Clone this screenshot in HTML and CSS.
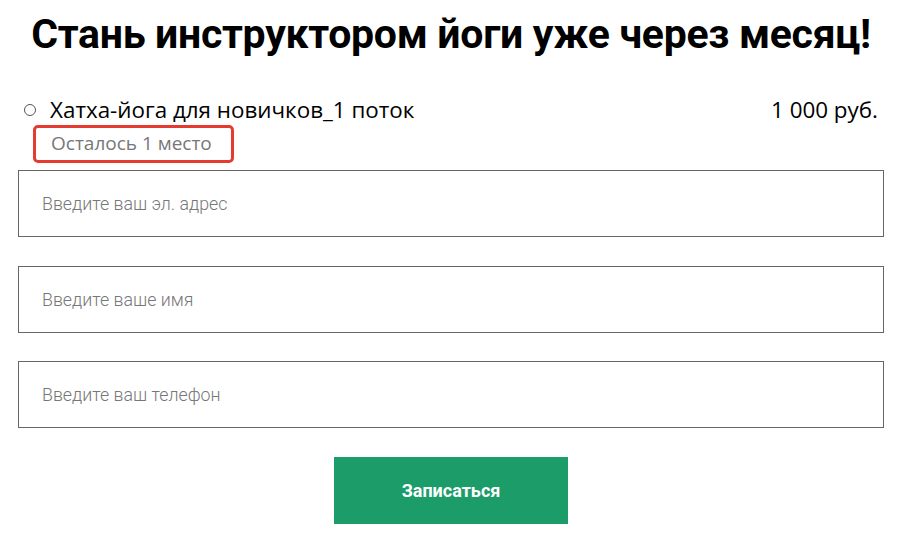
FILE: index.html
```html
<!DOCTYPE html>
<html lang="ru">
<head>
  <meta charset="UTF-8" />
  <title>Запись на курс</title>
  <link rel="stylesheet" href="styles.css">
</head>
<body>
  <h1 class="title">Стань инструктором йоги уже через месяц!</h1>

  <div class="course">
    <label class="course-row">
      <span class="radio"></span>
      <span class="course-name">Хатха-йога для новичков_1 поток</span>
      <span class="course-price">1 000 руб.</span>
    </label>
    <div class="seats">Осталось 1 место</div>
  </div>

  <form class="signup">
    <input class="field" type="email" placeholder="Введите ваш эл. адрес" />
    <input class="field" type="text" placeholder="Введите ваше имя" />
    <input class="field" type="tel" placeholder="Введите ваш телефон" />
    <button class="submit" type="button">Записаться</button>
  </form>
</body>
</html>
```

FILE: styles.css
```css
body {
  margin: 0;
  padding: 0 23px 0 18px;
  background: #fff;
  font-family: "Open Sans", sans-serif;
  color: #000;
}
.title {
  margin: 0;
  padding-top: 8px;
  font-family: Roboto, sans-serif;
  font-weight: 700;
  font-size: 41px;
  line-height: 52px;
  letter-spacing: -0.3px;
  text-align: center;
}
.course {
  margin-top: 35px;
}
.course-row {
  display: flex;
  align-items: center;
  padding-left: 6px;
  padding-right: 6px;
}
.radio {
  width: 10px;
  height: 10px;
  border: 1.5px solid #555;
  border-radius: 50%;
  margin-right: 14px;
}
.course-name {
  flex: 1;
  font-size: 22.4px;
  line-height: 30px;
}
.course-price {
  font-size: 22.4px;
  line-height: 30px;
}
.seats {
  display: inline-block;
  margin: 0 0 0 15px;
  padding: 2px 19px 3px 15px;
  border: 3px solid #e53a30;
  border-radius: 5px;
  color: #777;
  font-size: 19px;
  line-height: 27px;
}
.signup {
  display: flex;
  flex-direction: column;
  align-items: center;
  gap: 28.5px;
  margin-top: 7px;
}
.field {
  width: 100%;
  height: 67px;
  box-sizing: border-box;
  border: 1px solid #666;
  padding: 0 23px;
  font-family: Roboto, sans-serif;
  font-weight: 300;
  font-size: 17.8px;
  outline: none;
}
.field::placeholder {
  color: #777;
}
.submit {
  width: 234px;
  height: 67px;
  border: none;
  background: #1b9c68;
  color: #fff;
  font-family: Roboto, sans-serif;
  font-weight: 700;
  font-size: 18px;
  cursor: pointer;
}
```
